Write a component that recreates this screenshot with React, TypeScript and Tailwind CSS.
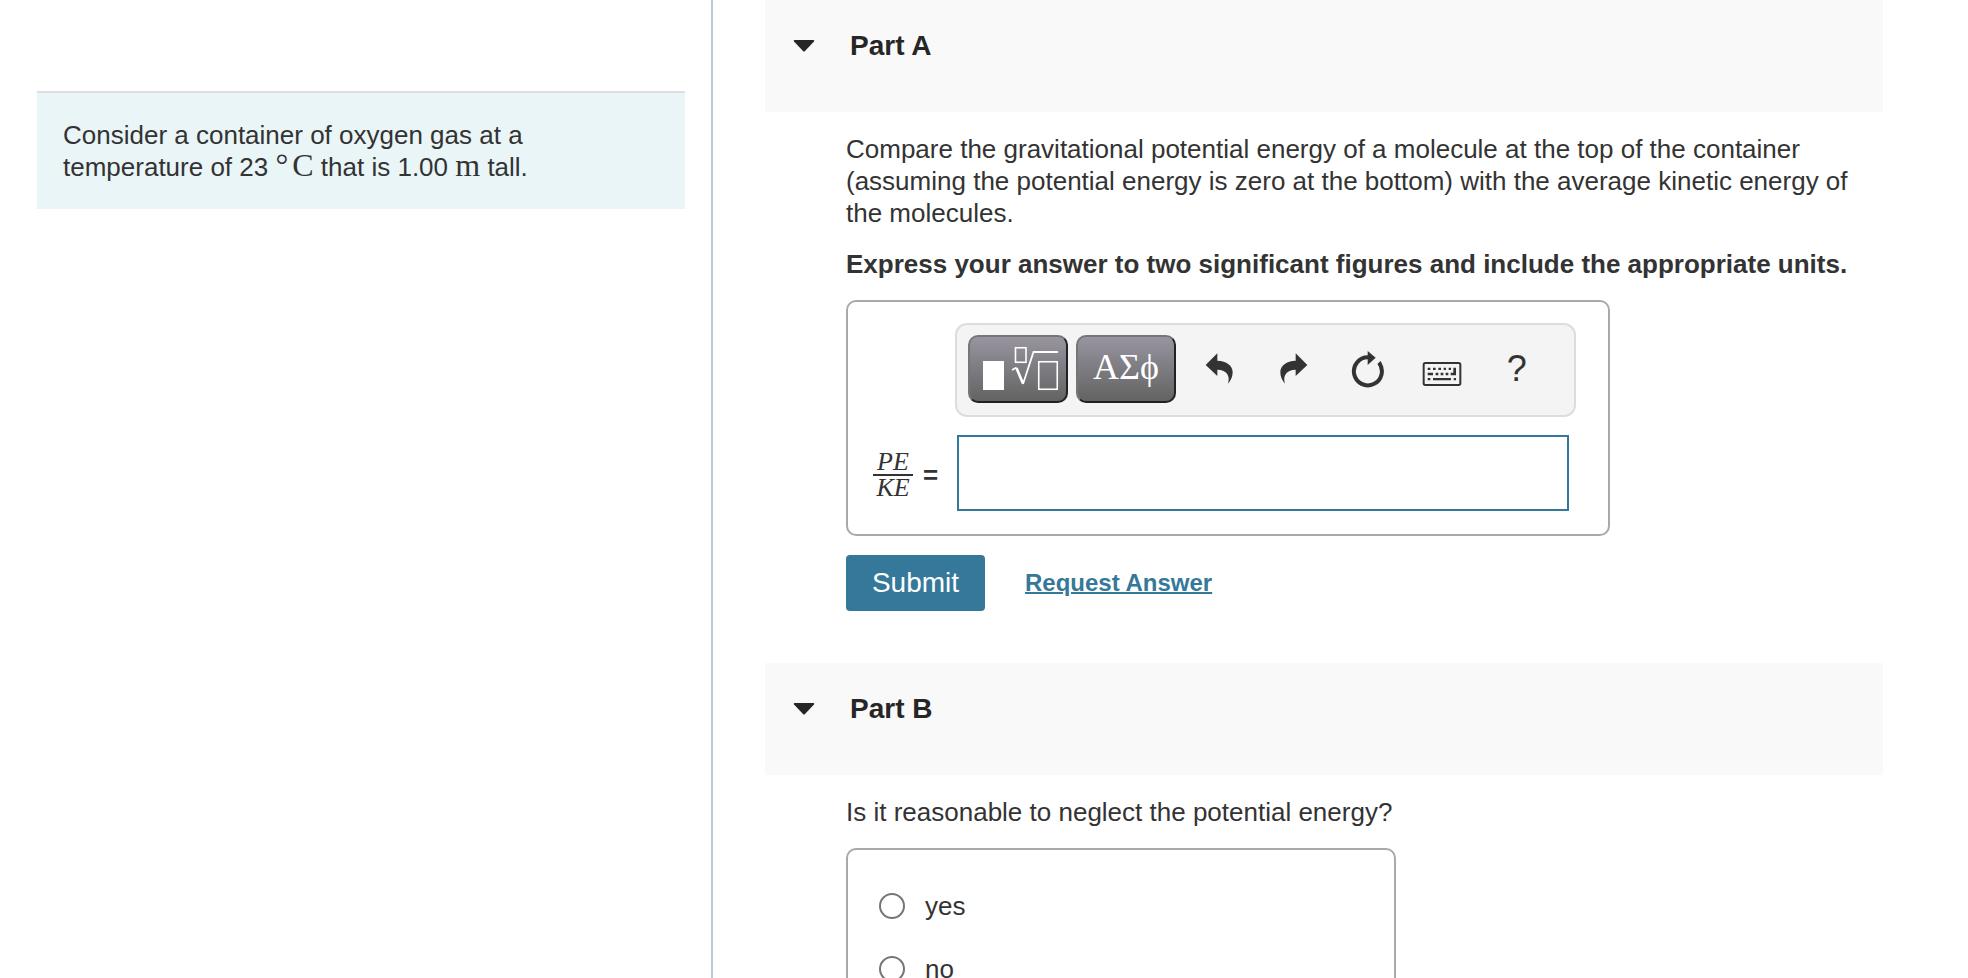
import type { ReactNode } from "react";

interface PartProps {
  title: string;
  children: ReactNode;
}

function Part({ title, children }: PartProps) {
  return (
    <section>
      <header className="h-28 bg-[#f9f9f9] pt-7 pl-7">
        <button type="button" className="flex items-center gap-[35px] text-[28px] leading-9 font-bold text-[#262626]">
          <svg className="h-3 w-[22px]" viewBox="0 0 22 12" fill="currentColor" aria-hidden="true">
            <path d="M1.4 0H20.6Q21.8 0.6 21 1.5L12 11Q11 12 10 11L1 1.5Q0.2 0.6 1.4 0Z" />
          </svg>
          {title}
        </button>
      </header>
      <div className="pt-[21px] pl-[81px]">{children}</div>
    </section>
  );
}

function TemplatesIcon() {
  return (
    <svg className="h-[68px] w-[100px] shrink-0" viewBox="0 0 100 68" fill="none" stroke="#fff" aria-hidden="true">
      <rect x="15" y="26" width="21" height="29" fill="#fff" stroke="none" />
      <rect x="47.5" y="12.75" width="10.5" height="14.5" strokeWidth="1.6" />
      <path d="M44 35L48.5 32.5" strokeWidth="1.6" />
      <path d="M48.5 33L55 48.5" strokeWidth="2.6" />
      <path d="M55 49L65.5 17H90" strokeWidth="1.8" />
      <rect x="70.75" y="26.75" width="18.5" height="27.5" strokeWidth="1.6" />
    </svg>
  );
}

function UndoIcon() {
  return (
    <svg className="size-10" viewBox="25 117 120 120" fill="currentColor" aria-hidden="true">
      <path d="M45 165L80 130V152C108 153 126 167 126 186C126 200 121 211 112 221C119 197 109 180 80 179V198Z" />
    </svg>
  );
}

function RedoIcon() {
  return (
    <svg className="size-10" viewBox="257 117 120 120" fill="currentColor" aria-hidden="true">
      <path d="M357 165L322 130V152C294 153 276 167 276 186C276 200 281 211 290 221C283 197 293 180 322 179V198Z" />
    </svg>
  );
}

function ResetIcon() {
  return (
    <svg className="size-10" viewBox="474 117 120 120" aria-hidden="true">
      <path d="M567 158.500A42 42 0 1 1 534 142" fill="none" stroke="currentColor" strokeWidth="12" />
      <path d="M533 123L557 143L533 165Z" fill="currentColor" />
      <path d="M571 153L576 161L563 163Z" fill="currentColor" />
    </svg>
  );
}

function KeyboardIcon() {
  return (
    <svg className="size-10" viewBox="696 117 120 120" fill="currentColor" aria-hidden="true">
      <rect x="701" y="159" width="110" height="66" rx="5" fill="none" stroke="currentColor" strokeWidth="6" />
      <path d="M713 173h8v7h-8zM729 173h8v7h-8zM745 173h8v7h-8zM761 173h7v7h-7zM776 173h7v7h-7z" />
      <path d="M713 188h16v8h-16zM737 188h8v8h-8zM752 188h8v8h-8zM767 188h8v8h-8zM782 188h8v-15h8v23h-16z" />
      <path d="M713 204h8v7h-8zM729 204h54v7h-54zM791 204h7v7h-7z" />
    </svg>
  );
}

const tools = [
  { label: "Undo", icon: <UndoIcon /> },
  { label: "Redo", icon: <RedoIcon /> },
  { label: "Reset", icon: <ResetIcon /> },
  { label: "Keyboard shortcuts", icon: <KeyboardIcon /> },
  { label: "Help", icon: <span className="text-4xl">?</span> },
];

const padButton =
  "flex h-[68px] w-[100px] items-center justify-center rounded-[10px] border-2 border-t-[#767676] border-r-[#222] border-b-[#222] border-l-[#767676] bg-linear-to-b from-[#9895a0] to-[#636363] text-white";

function Toolbar() {
  return (
    <div className="flex items-center rounded-xl border-2 border-[#ddd] bg-[#f4f4f4] pt-[10px] pr-5 pb-3 pl-[11px]">
      <button type="button" aria-label="Templates" className={padButton}>
        <TemplatesIcon />
      </button>
      <button
        type="button"
        aria-label="Symbols"
        className={`${padButton} ml-2 pb-1 font-['Liberation_Serif',serif] text-4xl`}
      >
        ΑΣϕ
      </button>
      <div className="ml-[6px] flex flex-1">
        {tools.map((tool) => (
          <button
            key={tool.label}
            type="button"
            aria-label={tool.label}
            className="flex h-10 flex-1 items-center justify-center"
          >
            {tool.icon}
          </button>
        ))}
      </div>
    </div>
  );
}

function AnswerBox() {
  return (
    <div className="mt-5 grid w-[764px] grid-cols-[107px_1fr] gap-y-[18px] rounded-[10px] border-2 border-[#a9a9a9] pt-[21px] pr-8 pb-[23px]">
      <div className="col-start-2">
        <Toolbar />
      </div>
      <label htmlFor="ratio" className="flex items-center gap-[10px] pt-1 pl-[25px]">
        <span className="flex w-10 flex-col text-center font-['Liberation_Serif',serif] leading-6 italic">
          <span className="border-b-2 border-[#333]">PE</span>
          <span>KE</span>
        </span>
        <span className="font-bold">=</span>
      </label>
      <input
        id="ratio"
        type="text"
        className="mr-[7px] ml-[2px] h-[76px] border-2 border-[#367899] bg-white px-3 outline-none"
      />
    </div>
  );
}

function Unit({ children }: { children: ReactNode }) {
  return <span className="font-['Liberation_Serif',serif] text-[32px] leading-6">{children}</span>;
}

export default function App() {
  return (
    <div className="grid h-screen grid-cols-[713px_1fr] overflow-hidden bg-white font-['Liberation_Sans',Arial,sans-serif] text-[26px] leading-8 text-[#333]">
      <aside className="border-r-2 border-[#b9c9dc] pt-[91px] pr-[26px] pl-[37px]">
        <div className="border-t-2 border-[#dddfe1] bg-[#eaf5f7] px-[26px] pt-[26px] pb-[26px]">
          <p className="max-w-[500px]">
            Consider a container of oxygen gas at a temperature of 23{" "}
            <Unit>
              <span className="mr-1">°</span>C
            </Unit>{" "}
            that is 1.00 <Unit>m</Unit> tall.
          </p>
        </div>
      </aside>

      <main className="pr-[85px] pl-[52px]">
        <Part title="Part A">
          <p>
            Compare the gravitational potential energy of a molecule at the top of the container (assuming the
            potential energy is zero at the bottom) with the average kinetic energy of the molecules.
          </p>
          <p className="mt-[19px] font-bold">
            Express your answer to two significant figures and include the appropriate units.
          </p>
          <AnswerBox />
          <div className="mt-[19px] mb-[52px] flex items-center gap-10">
            <button type="button" className="h-14 w-[139px] rounded bg-[#367899] text-[28px] text-white">
              Submit
            </button>
            <a href="#request-answer" className="text-2xl font-bold text-[#367899] underline decoration-2">
              Request Answer
            </a>
          </div>
        </Part>

        <Part title="Part B">
          <p id="part-b-question">Is it reasonable to neglect the potential energy?</p>
          <div
            role="radiogroup"
            aria-labelledby="part-b-question"
            className="mt-5 flex w-[550px] flex-col gap-[31px] rounded-[10px] border-2 border-[#a9a9a9] py-10 pl-[31px]"
          >
            {["yes", "no"].map((choice) => (
              <label key={choice} className="flex items-center gap-5">
                <input
                  type="radio"
                  name="neglect"
                  value={choice}
                  className="size-[26px] appearance-none rounded-full border-2 border-[#767676] bg-white checked:border-8"
                />
                {choice}
              </label>
            ))}
          </div>
        </Part>
      </main>
    </div>
  );
}
